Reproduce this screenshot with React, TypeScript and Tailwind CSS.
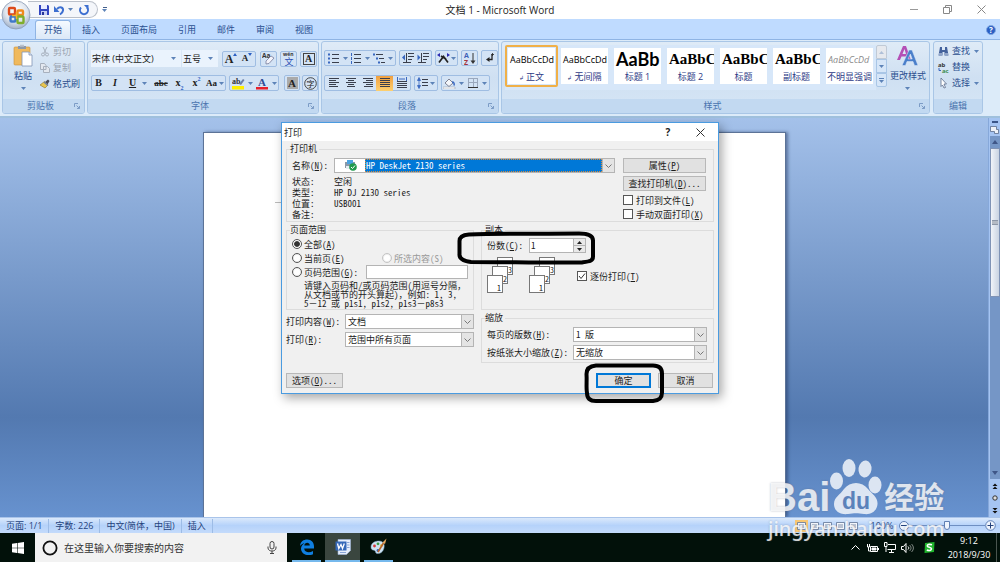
import type { ReactNode } from "react";

const UI = "[font-family:'Open_Sans','Noto_Sans_CJK_SC',sans-serif]";
const SONG = "[font-family:'Noto_Sans_Mono_CJK_SC','Noto_Sans_CJK_SC',monospace]";
const SERIF = "[font-family:'Liberation_Serif','Noto_Sans_CJK_SC',serif]";

type Kids = { children?: ReactNode; className?: string };

function Caret({ className = "" }: { className?: string }) {
  return (
    <svg viewBox="0 0 5 3" className={`h-[3px] w-[5px] shrink-0 ${className}`}>
      <path d="M0 0h5L2.500 3z" fill="#5d83b8" />
    </svg>
  );
}

/* ---------- title bar ---------- */

function OfficeOrb() {
  return (
    <svg viewBox="0 0 30 30" className="h-[30px] w-[30px]">
      <defs>
        <radialGradient id="orb" cx="50%" cy="35%" r="65%">
          <stop offset="0" stopColor="#ffffff" />
          <stop offset=".6" stopColor="#dfe5ee" />
          <stop offset="1" stopColor="#9fb0c8" />
        </radialGradient>
      </defs>
      <circle cx="15" cy="15" r="14" fill="url(#orb)" stroke="#8a9ab4" strokeWidth=".8" />
      <g fill="none" strokeWidth="2.400">
        <rect x="8" y="8" width="6" height="6.500" rx="1" stroke="#dc4a1c" />
        <rect x="16.500" y="10.500" width="5.500" height="4.500" rx="1" stroke="#f08a1d" />
        <rect x="9.500" y="16.500" width="5" height="5" rx="1" stroke="#3f78c8" />
        <rect x="16.500" y="16.500" width="6" height="6.500" rx="1" stroke="#7fae2c" />
      </g>
      <path d="M11 15.500h5M15.500 12v7" stroke="#f4b52a" strokeWidth="1.500" />
    </svg>
  );
}

function TitleBar() {
  return (
    <header className="grid h-[19px] shrink-0 grid-cols-3 items-center bg-white">
      <div className="flex h-full items-center pl-7">
        <div className="flex h-[17px] w-[70px] items-center rounded-r-full border border-l-0 border-[#b9bfc9] bg-[#f4f6fa] pl-[10px]">
          <button aria-label="保存" className="h-3 w-3">
            <svg viewBox="0 0 12 12">
              <path d="M1 1h9l1 1v9H1z" fill="#3346c0" />
              <path d="M3 1h6v4H3z" fill="#e8ecff" />
              <path d="M3 7h6v4H3z" fill="#c7cff3" />
              <path d="M4 8h2v3H4z" fill="#26359a" />
            </svg>
          </button>
          <button aria-label="撤消" className="ml-1 flex items-center gap-[3px]">
            <svg viewBox="0 0 11 12" className="h-3 w-[11px]">
              <path d="M3 5c3-3 6.500-1.500 6 1.500-.3 2-1.500 3-3 4" fill="none" stroke="#3d6fd0" strokeWidth="2" />
              <path d="M0 2v6h5.500z" fill="#3d6fd0" />
            </svg>
            <Caret />
          </button>
          <button aria-label="重复" className="ml-[5px] h-3 w-3">
            <svg viewBox="0 0 12 12">
              <path d="M3 3.500a4 4 0 1 0 6 0" fill="none" stroke="#3d6fd0" strokeWidth="2" />
              <path d="M6 1h4.500v5z" fill="#3d6fd0" />
            </svg>
          </button>
        </div>
        <button aria-label="自定义快速访问工具栏" className="ml-1 flex flex-col items-center gap-px">
          <span className="h-px w-[4px] bg-[#44608c]" />
          <Caret />
        </button>
      </div>
      <h1 className="text-center text-[10px] leading-[14px] whitespace-nowrap text-[#222]">文档 1 - Microsoft Word</h1>
      <div className="flex items-center justify-end gap-[25px] pr-[14px]">
        <button aria-label="最小化" className="flex h-2 w-2 items-center">
          <span className="h-px w-2 bg-[#999]" />
        </button>
        <button aria-label="向下还原" className="h-[9px] w-[9px]">
          <svg viewBox="0 0 9 9" fill="none" stroke="#888">
            <path d="M.5 2.500h6v6h-6zM2.500 2V.5h6v6H7" />
          </svg>
        </button>
        <button aria-label="关闭" className="h-[9px] w-[9px]">
          <svg viewBox="0 0 9 9" fill="none" stroke="#888">
            <path d="M.5.500l8 8M8.500.500l-8 8" />
          </svg>
        </button>
      </div>
    </header>
  );
}

function Tabs() {
  const tabs = ["插入", "页面布局", "引用", "邮件", "审阅", "视图"];
  return (
    <nav className="flex h-5 shrink-0 items-end gap-px bg-[#bfdbff] pl-[35px] text-[9px] text-[#2a4f8f]">
      <button className="h-[19px] rounded-t-[3px] border border-b-0 border-[#8fb4e4] bg-linear-to-b from-[#f5faff] to-[#dbe8f7] px-2 leading-[16px]">
        开始
      </button>
      {tabs.map((t) => (
        <button key={t} className="h-[19px] px-[10px] leading-[17px]">
          {t}
        </button>
      ))}
      <button
        aria-label="帮助"
        className="mr-1 mb-1 ml-auto flex h-[10px] w-[10px] items-center justify-center rounded-full border border-[#7fa6e0] bg-[#2b5fc4] text-[8px] leading-none font-bold text-white"
      >
        ?
      </button>
    </nav>
  );
}

/* ---------- ribbon ---------- */

function Group({ label, launcher = true, className = "", children }: Kids & { label: string; launcher?: boolean }) {
  return (
    <section
      className={`flex flex-col overflow-hidden rounded-[3px] border border-[#a9c6e6] bg-linear-to-b from-[#dfebf7] via-[#cfe0f2] to-[#d6e6f6] ${className}`}
    >
      <div className="flex-1">{children}</div>
      <div className="flex h-[14px] items-center bg-[#c2d9f1] px-1 text-[9px] leading-[14px] text-[#4a74ae]">
        <span className="flex-1 text-center">{label}</span>
        {launcher && (
          <button aria-label={`${label}选项`} className="h-[6px] w-[6px]">
            <svg viewBox="0 0 6 6" fill="none" stroke="#7c9cc6">
              <path d="M.5 4V.5H4M2.500 2.500l3 3M5.500 3v2.500H3" />
            </svg>
          </button>
        )}
      </div>
    </section>
  );
}

function Box({ children, className = "" }: Kids) {
  return (
    <div className={`flex h-4 items-center rounded-[2px] border border-[#9fbde2] bg-[#d3e3f5] ${className}`}>{children}</div>
  );
}

function Tool({ name, children, className = "w-4" }: Kids & { name: string }) {
  return (
    <button aria-label={name} className={`flex h-[15px] items-center justify-center gap-[3px] leading-none ${className}`}>
      {children}
    </button>
  );
}

function ClipboardGroup() {
  return (
    <Group label="剪贴板" className="w-[83px]">
      <div className="flex gap-1 pt-[2px] pl-[7px] text-[9px] text-[#2a4f8f]">
        <button className="flex w-[26px] flex-col items-center">
          <svg viewBox="0 0 20 23" className="h-[23px] w-5">
            <rect x="1" y="3" width="16" height="18" rx="1" fill="#f0b95c" stroke="#c98f38" strokeWidth=".6" />
            <path d="M5 2h8v3H5z" fill="#8d98a8" />
            <path d="M7 .800h4v2H7z" fill="#b9c1cc" />
            <path d="M9 8h7l3 3v11H9z" fill="#fff" stroke="#8296b6" strokeWidth=".8" />
            <path d="M16 8v3h3" fill="#dce5f1" stroke="#8296b6" strokeWidth=".8" />
          </svg>
          <span className="mt-[2px] leading-[14px]">粘贴</span>
          <Caret className="mt-1" />
        </button>
        <div className="flex flex-col">
          <button className="flex h-4 items-center gap-[3px] text-[#9aa3b0]">
            <svg viewBox="0 0 10 10" className="h-[10px] w-[10px]" fill="none" stroke="#a7b0bd">
              <path d="M3 0l3 6M7 0L4 6" />
              <circle cx="3" cy="7.500" r="1.500" />
              <circle cx="7" cy="7.500" r="1.500" />
            </svg>
            剪切
          </button>
          <button className="flex h-4 items-center gap-[3px] text-[#9aa3b0]">
            <svg viewBox="0 0 10 10" className="h-[10px] w-[10px]" fill="#e3e8ef" stroke="#a7b0bd">
              <path d="M.5.500h4l1.500 2v4H.5zM3.500 3.500h4l2 2v4h-6z" />
            </svg>
            复制
          </button>
          <button className="flex h-4 items-center gap-[3px]">
            <svg viewBox="0 0 10 10" className="h-[10px] w-[10px]">
              <path d="M5 3l2.500 2.500L9.500 2 8 .500z" fill="#4a4a58" />
              <path d="M4.500 2.500L8 6 5 9 0 6z" fill="#e9c64f" stroke="#8c7427" strokeWidth=".6" />
              <path d="M4 3l4 3.500" stroke="#6c7fa8" strokeWidth="1.500" />
            </svg>
            格式刷
          </button>
        </div>
      </div>
    </Group>
  );
}

function Combo({ label, value, className }: { label: string; value: string; className: string }) {
  return (
    <label className={`flex h-[17px] items-center bg-[#eaf3fd] pr-[5px] ${className}`}>
      <select aria-label={label} className="h-full min-w-0 flex-1 appearance-none bg-transparent pl-px text-[9px] leading-[17px] text-[#222]">
        <option>{value}</option>
      </select>
      <Caret />
    </label>
  );
}

function FontGroup() {
  return (
    <Group label="字体" className="w-[232px]">
      <div className="flex flex-col gap-2 pt-2 pl-[3px]">
        <div className="flex items-center">
          <Combo label="字体名称" value="宋体 (中文正文)" className="w-[90px]" />
          <Combo label="字号" value="五号" className="ml-px w-[36px]" />
          <Box className={`ml-1 font-bold text-[#222] ${SERIF}`}>
            <Tool name="增大字体" className="w-4 text-[12px] !gap-0">
              A
              <svg viewBox="0 0 4 3" className="mt-[2px] h-[3px] w-1 self-start"><path d="M0 3h4L2 0z" fill="#2b5fc4" /></svg>
            </Tool>
            <Tool name="缩小字体" className="w-4 text-[9px] !gap-0">
              A
              <svg viewBox="0 0 4 3" className="mt-[2px] h-[3px] w-1 self-start"><path d="M0 0h4L2 3z" fill="#2b5fc4" /></svg>
            </Tool>
          </Box>
          <Box className="ml-1">
            <Tool name="清除格式" className="w-[15px]">
              <svg viewBox="0 0 13 13" className="h-[13px] w-[13px]">
                <text x="0" y="6" fontSize="6.500" fontWeight="bold" fill="#333">Aa</text>
                <path d="M4 9l5-5 3 2-5 5.500-3 .5z" fill="#f3f3fa" stroke="#777c9c" strokeWidth=".8" />
              </svg>
            </Tool>
          </Box>
          <Box className="ml-[3px]">
            <Tool name="拼音指南" className="w-[15px]">
              <svg viewBox="0 0 14 15" className="h-[15px] w-[14px] overflow-visible">
                <text x="1" y="5" fontSize="5" fontWeight="bold" fill="#333">wén</text>
                <text x="2.500" y="13.500" fontSize="9" fill="#2b4fb4">文</text>
              </svg>
            </Tool>
          </Box>
          <Box className="ml-[3px]">
            <Tool name="字符边框" className="w-[15px]">
              <span className={`h-[12px] w-[12px] border border-[#444] text-[10px] leading-[10px] font-bold text-[#222] ${SERIF}`}>A</span>
            </Tool>
          </Box>
        </div>
        <div className={`flex items-center text-[#222] ${SERIF}`}>
          <Box>
            <Tool name="加粗" className="w-[13px] text-[10px] font-bold">B</Tool>
            <Tool name="倾斜" className="w-[20px] text-[10px] font-bold italic">I</Tool>
            <Tool name="下划线" className="w-[26px] text-[10px] font-bold">
              <span className="mr-[3px] underline">U</span>
              <Caret />
            </Tool>
            <Tool name="删除线" className="w-[20px] text-[9px] font-bold line-through">abc</Tool>
            <Tool name="下标" className="w-[17px] text-[10px] font-bold !gap-0">
              x<span className="self-end text-[6px] text-[#2b5fc4]">2</span>
            </Tool>
            <Tool name="上标" className="w-[17px] text-[10px] font-bold !gap-0">
              x<span className="self-start text-[6px] text-[#2b5fc4]">2</span>
            </Tool>
            <Tool name="更改大小写" className="w-[20px] text-[9px] font-bold !gap-[2px]">
              Aa
              <Caret />
            </Tool>
          </Box>
          <Box className="ml-[3px]">
            <Tool name="突出显示" className="w-6">
              <svg viewBox="0 0 13 13" className="h-[13px] w-[13px]">
                <text x="0" y="7" fontSize="8" fontWeight="bold" fill="#333">ab</text>
                <path d="M7 7l4-5 1.500 1L9 8z" fill="#6c7fa8" />
                <path d="M0 9h12v3.500H0z" fill="#ffee00" />
              </svg>
              <Caret />
            </Tool>
            <Tool name="字体颜色" className="w-6">
              <svg viewBox="0 0 13 13" className="h-[13px] w-[13px]">
                <text x="2" y="9" fontSize="11" fontWeight="bold" fill="#2e4a94">A</text>
                <path d="M0 10h12v2.500H0z" fill="#e8202a" />
              </svg>
              <Caret />
            </Tool>
          </Box>
          <Box className="ml-[5px]">
            <Tool name="字符底纹" className="w-[14px]">
              <span className="h-[12px] w-[11px] bg-[#aaa] text-center text-[11px] leading-[12px] font-bold">A</span>
            </Tool>
          </Box>
          <Box className="ml-[2px]">
            <Tool name="带圈字符" className="w-[14px]">
              <svg viewBox="0 0 13 13" className="h-[13px] w-[13px]">
                <circle cx="6.500" cy="6.500" r="5.800" fill="none" stroke="#333" strokeWidth=".9" />
                <text x="2.500" y="9.500" fontSize="8" fill="#222">字</text>
              </svg>
            </Tool>
          </Box>
        </div>
      </div>
    </Group>
  );
}

function Lines({ d, dots }: { d: string; dots?: ReactNode }) {
  return (
    <svg viewBox="0 0 12 12" className="h-3 w-3" fill="none">
      <path d={d} stroke="#3a3f4c" />
      {dots}
    </svg>
  );
}

function ParagraphGroup() {
  const blue = "#3867c0";
  return (
    <Group label="段落" className="w-[178px]">
      <div className="flex flex-col gap-[9px] pt-2 pl-[2px]">
        <div className="flex items-center gap-[3px]">
          <Box className="w-[73px] justify-between px-[2px]">
            <Tool name="项目符号" className="w-[21px]">
              <Lines d="M4 2.500h7M4 6.500h7M4 10.500h7" dots={<path d="M0 2.500h2M0 6.500h2M0 10.500h2" stroke={blue} strokeWidth="2" />} />
              <Caret />
            </Tool>
            <Tool name="编号" className="w-[21px]">
              <Lines d="M4 2.500h7M4 6.500h7M4 10.500h7" dots={<path d="M1.500 1v3M1.500 5v3M1.500 9v3" stroke={blue} />} />
              <Caret />
            </Tool>
            <Tool name="多级列表" className="w-[21px]">
              <Lines d="M3 2.500h7M6 6.500h5M8 10.500h4" dots={<path d="M0 2.500h2M3 6.500h2M5 10.500h2" stroke={blue} strokeWidth="2" />} />
              <Caret />
            </Tool>
          </Box>
          <Box className="w-[33px] justify-around">
            <Tool name="减少缩进量" className="w-[14px]">
              <Lines d="M6 1.500h6M6 4.500h6M6 7.500h4M1 10.500h8M4.500 1v10" dots={<path d="M0 5.500l3-3v6z" fill={blue} />} />
            </Tool>
            <Tool name="增加缩进量" className="w-[14px]">
              <Lines d="M6 1.500h6M6 4.500h6M6 7.500h4M1 10.500h8M4.500 1v10" dots={<path d="M3.500 5.500l-3-3v6z" fill={blue} />} />
            </Tool>
          </Box>
          <Box className="w-[23px]">
            <Tool name="中文版式" className="w-[22px] !gap-px">
              <svg viewBox="0 0 13 12" className="h-3 w-[13px]" fill="none">
                <path d="M2 10.500l4.500-6 4.500 6M4 4l5 3" stroke="#222" strokeWidth="1.700" />
                <path d="M0 3l3-2v4zM13 3l-3-2v4z" fill="#2b2bb0" />
              </svg>
              <Caret />
            </Tool>
          </Box>
          <Box className="w-[17px]">
            <Tool name="排序" className="w-4">
              <svg viewBox="0 0 12 13" className="h-[13px] w-3">
                <text x="0" y="6" fontSize="7" fontWeight="bold" fill="#3d5fb8">A</text>
                <text x="0" y="12.500" fontSize="7" fontWeight="bold" fill="#a5343c">Z</text>
                <path d="M9 1v9" stroke="#333" />
                <path d="M6.500 8.500h5L9 12z" fill="#333" />
              </svg>
            </Tool>
          </Box>
          <Box className="w-[17px]">
            <Tool name="显示编辑标记" className="w-4">
              <svg viewBox="0 0 12 12" className="h-3 w-3">
                <path d="M8 3v4.500H5" fill="none" stroke="#222" strokeWidth="1.300" />
                <path d="M2 7.500l3.500-2.500v5z" fill="#222" />
                <path d="M7 2.500h3M8.500 1v3" stroke="#222" strokeWidth=".8" />
              </svg>
            </Tool>
          </Box>
        </div>
        <div className="flex items-center gap-[3px]">
          <Box>
            <Tool name="左对齐" className="w-[17px]"><Lines d="M1 1.500h10M1 3.500h7M1 5.500h10M1 7.500h7M1 9.500h9" /></Tool>
            <Tool name="居中" className="w-[17px]"><Lines d="M1 1.500h10M3 3.500h6M1 5.500h10M3 7.500h6M2 9.500h8" /></Tool>
            <Tool name="右对齐" className="w-[17px]"><Lines d="M1 1.500h10M4 3.500h7M1 5.500h10M4 7.500h7M2 9.500h9" /></Tool>
            <Tool name="两端对齐" className="w-[17px] bg-linear-to-b from-[#f0a040] to-[#fdd070]">
              <Lines d="M1 1.500h10M1 3.500h10M1 5.500h10M1 7.500h10M1 9.500h10" />
            </Tool>
            <Tool name="分散对齐" className="w-[17px]">
              <Lines d="M1 4.500h10M1 6.500h10M1 8.500h10M1 10.500h10" dots={<path d="M1.500 0v4M10.500 0v4M3 2h6" stroke={blue} />} />
            </Tool>
          </Box>
          <Box className="w-[24px]">
            <Tool name="行距" className="w-[22px] !gap-px">
              <Lines d="M5 2.500h6M5 5.500h6M5 8.500h6" dots={<path d="M.5 3.500l1.500-3 1.500 3zM.5 8.500l1.500 3 1.500-3zM2 3v6" fill={blue} stroke={blue} strokeWidth=".8" />} />
              <Caret />
            </Tool>
          </Box>
          <Box className="w-[49px]">
            <Tool name="底纹" className="w-6">
              <svg viewBox="0 0 13 12" className="h-3 w-[13px]">
                <path d="M2 6l4-4 4 4-4 3.500z" fill="#f5f7fb" stroke="#667" strokeWidth=".8" />
                <path d="M9 5c2 0 2.500 1.500 2 3.500" fill="none" stroke="#3867c0" strokeWidth="1.500" />
                <path d="M0 10h12v2H0z" fill="#fff" stroke="#8b93a3" strokeWidth=".5" />
              </svg>
              <Caret />
            </Tool>
            <Tool name="边框" className="w-6">
              <svg viewBox="0 0 12 12" className="h-3 w-3" fill="none">
                <path d="M1.500 1v9M6.500 1v9M10.500 1v9M1 1.500h10M1 5.500h10" stroke="#9aa8bd" />
                <path d="M1 10.500h10" stroke="#333" />
              </svg>
              <Caret />
            </Tool>
          </Box>
        </div>
      </div>
    </Group>
  );
}

const STYLES = [
  { sample: "AaBbCcDd", label: "正文", mark: true, cls: "text-[9px]" },
  { sample: "AaBbCcDd", label: "无间隔", mark: true, cls: "text-[9px]" },
  { sample: "AaBb", label: "标题 1", cls: "text-[18px] font-bold [font-family:'Lato','Open_Sans',sans-serif]" },
  { sample: "AaBbC", label: "标题 2", cls: "text-[15px] font-bold [font-family:'Liberation_Serif',serif]" },
  { sample: "AaBbC", label: "标题", cls: "text-[15px] font-bold [font-family:'Liberation_Serif',serif]" },
  { sample: "AaBbC", label: "副标题", cls: "text-[15px] font-bold [font-family:'Liberation_Serif',serif]" },
  { sample: "AaBbCcDd", label: "不明显强调", cls: "text-[9px] italic text-[#8a8a8a]" },
];

function StylesGroup() {
  return (
    <Group label="样式" className="min-w-[428px] flex-1">
      <div className="flex pt-[3px] pl-[3px]">
        <div className="flex flex-1 bg-[#d7e7f9]">
          {STYLES.map((s, i) => (
            <button
              key={s.label}
              className={`flex h-[42px] w-[53px] shrink-0 rounded-[2px] border-2 p-px ${
                i === 0 ? "border-[#f0b048]" : "border-transparent"
              }`}
            >
              <span className="flex h-full w-full flex-col overflow-hidden bg-white text-black">
                <span className={`h-[23px] overflow-hidden pl-[2px] text-left leading-[23px] whitespace-nowrap ${s.cls}`}>
                  {s.sample}
                </span>
                <span className="text-center text-[9px] leading-[12px] whitespace-nowrap text-[#2d3a86]">
                  {s.mark && <span className="mr-[2px] text-[6px]">↲</span>}
                  {s.label}
                </span>
              </span>
            </button>
          ))}
        </div>
        <div className="flex w-[11px] flex-col">
          <button aria-label="上一行" className="flex h-[14px] items-center justify-center rounded-t-[2px] border border-[#c0cad6] bg-[#e6e9ee]">
            <Caret className="rotate-180 opacity-40" />
          </button>
          <button aria-label="下一行" className="flex h-[14px] items-center justify-center border border-[#a9c6e6] bg-[#d6e6f8]">
            <Caret />
          </button>
          <button aria-label="其他" className="flex h-[14px] flex-col items-center justify-center gap-px rounded-b-[2px] border border-[#a9c6e6] bg-[#d6e6f8]">
            <span className="h-px w-[5px] bg-[#5d83b8]" />
            <Caret />
          </button>
        </div>
        <button className="flex w-[43px] flex-col items-center text-[9px] whitespace-nowrap text-[#2a4f8f]">
          <svg viewBox="0 0 22 22" className="h-[22px] w-[22px]">
            <path d="M0 15L6 1h3l5 14h-3l-1-3.500H4.500L3 15zM5.500 9H9L7.500 4z" fill="#b44fb6" />
            <path d="M5 20.500L12 5h3l6 15.500h-3.500L16 16.500h-6L8.500 20.500zM11 14h4.200L13.400 9z" fill="#4a7fca" stroke="#dfeaf8" strokeWidth=".5" />
          </svg>
          <span className="mt-[2px] leading-[14px]">更改样式</span>
          <Caret className="mt-1" />
        </button>
      </div>
    </Group>
  );
}

function EditGroup() {
  return (
    <Group label="编辑" launcher={false} className="ml-px w-[50px]">
      <div className="flex flex-col pt-px pl-[4px] text-[9px] text-[#2a4f8f]">
        <button className="flex h-4 items-center gap-[3px]">
          <svg viewBox="0 0 11 11" className="h-[11px] w-[11px]">
            <path d="M2 1h2v3h3V1h2l1.500 8.500h-4V6h-2v3.500H.5z" fill="#44629c" />
            <path d="M1 8h3M7 8h3" stroke="#dde8f6" />
          </svg>
          查找
          <Caret className="ml-px" />
        </button>
        <button className="flex h-4 items-center gap-[3px]">
          <svg viewBox="0 0 11 12" className="h-3 w-[11px] overflow-visible">
            <text x="0" y="5.500" fontSize="6" fontWeight="bold" fill="#333">ab</text>
            <text x="4" y="11.500" fontSize="6" fontWeight="bold" fill="#3b8d50">ac</text>
            <path d="M1 7v2.500h2" fill="none" stroke="#3867c0" />
          </svg>
          替换
        </button>
        <button className="flex h-4 items-center gap-[3px]">
          <svg viewBox="0 0 11 12" className="h-3 w-[11px]">
            <path d="M3 1l5.500 6H6l1.500 3.500-1.500.500L4.500 8 3 9.500z" fill="#fff" stroke="#5a6c8c" strokeWidth=".8" />
          </svg>
          选择
          <Caret className="ml-px" />
        </button>
      </div>
    </Group>
  );
}

function Ribbon() {
  return (
    <div className="flex h-[79px] shrink-0 gap-[2px] border-t border-b-2 border-t-[#8fb4e4] border-b-[#9fc0dd] bg-[#dcebf9] pt-px pr-[17px] pb-[2px] pl-[2px]">
      <ClipboardGroup />
      <FontGroup />
      <ParagraphGroup />
      <StylesGroup />
      <EditGroup />
    </div>
  );
}

/* ---------- print dialog ---------- */

function Key({ k }: { k: string }) {
  return (
    <>
      (<u>{k}</u>)
    </>
  );
}

function Field({ legend, className = "", children }: Kids & { legend: string }) {
  return (
    <fieldset className={`min-w-0 border border-[#dcdcdc] ${className}`}>
      <legend className="ml-[3px] pr-[2px] leading-[10px]">{legend}</legend>
      {children}
    </fieldset>
  );
}

function Arrow() {
  return (
    <span className="flex w-3 items-center justify-center border-l border-[#b4b4b4] bg-[#e4e4e4]">
      <svg viewBox="0 0 7 4" className="h-1 w-[7px]" fill="none" stroke="#777">
        <path d="M.5.500l3 3 3-3" />
      </svg>
    </span>
  );
}

function Drop({ id, value, className = "" }: { id: string; value: string; className?: string }) {
  return (
    <div className={`flex h-[15px] border border-[#b4b4b4] bg-white ${className}`}>
      <select id={id} className="min-w-0 flex-1 appearance-none pl-[2px] leading-[13px]">
        <option>{value}</option>
      </select>
      <Arrow />
    </div>
  );
}

function DlgButton({ children, className = "" }: Kids) {
  return (
    <button className={`flex h-[15px] items-center justify-center border border-[#b8b8b8] bg-[#e1e1e1] leading-[13px] whitespace-nowrap ${className}`}>
      {children}
    </button>
  );
}

function Check({ id, checked, children }: Kids & { id: string; checked?: boolean }) {
  return (
    <div className="flex h-[14px] items-center gap-[3px] whitespace-nowrap">
      <span className="grid h-[10px] w-[10px] shrink-0">
        <input
          id={id}
          type="checkbox"
          defaultChecked={checked}
          className="peer col-start-1 row-start-1 h-[10px] w-[10px] appearance-none border border-[#555] bg-white"
        />
        <svg
          viewBox="0 0 10 10"
          className="pointer-events-none col-start-1 row-start-1 hidden h-[10px] w-[10px] peer-checked:block"
          fill="none"
          stroke="#333"
        >
          <path d="M2 5l2 2.500L8 2.500" />
        </svg>
      </span>
      <label htmlFor={id}>{children}</label>
    </div>
  );
}

function Radio({ id, checked, disabled, children, className = "" }: Kids & { id: string; checked?: boolean; disabled?: boolean }) {
  return (
    <div className={`flex h-[14px] items-center gap-[2px] whitespace-nowrap ${disabled ? "text-[#999]" : ""} ${className}`}>
      <input
        id={id}
        type="radio"
        name="range"
        defaultChecked={checked}
        disabled={disabled}
        className="h-[10px] w-[10px] shrink-0 appearance-none rounded-full border border-[#555] bg-white bg-clip-content p-px checked:bg-[#333] checked:shadow-[inset_0_0_0_1px_#fff] disabled:border-[#c4c4c4]"
      />
      <label htmlFor={id}>{children}</label>
    </div>
  );
}

function Sheets() {
  const sheet = (x: number, y: number, n: string, tx: number) => (
    <g key={n}>
      <rect x={x} y={y} width="15" height="17" fill="#fff" stroke="#777" />
      <text x={tx} y={y + 15} fontSize="8" fill="#222">
        {n}
      </text>
    </g>
  );
  return (
    <svg viewBox="0 0 26 36" className="h-9 w-[26px]">
      {sheet(10.5, 0.5, "3", 21)}
      {sheet(5.5, 9.5, "2", 16)}
      {sheet(0.5, 18.5, "1", 10)}
    </svg>
  );
}

function PrintDialog() {
  return (
    <div
      role="dialog"
      aria-label="打印"
      className={`absolute top-[122px] left-1/2 w-[438px] -translate-x-1/2 border border-[#4a9be0] bg-[#f0f0f0] text-[9px] leading-[11px] text-[#1c1c1c] shadow-[3px_4px_10px_rgba(0,0,0,0.35)] ${SONG}`}
    >
      <div className="flex h-[18px] items-center bg-white pr-[13px] pl-[2px]">
        <span className={UI}>打印</span>
        <button aria-label="帮助" className={`ml-auto w-2 text-[10px] font-bold ${UI}`}>
          ?
        </button>
        <button aria-label="关闭" className="ml-6 h-[9px] w-[9px]">
          <svg viewBox="0 0 9 9" fill="none" stroke="#333">
            <path d="M.5.500l8 8M8.500.500l-8 8" />
          </svg>
        </button>
      </div>
      <div className="px-1 pt-[3px] pb-[5px]">
        <Field legend="打印机" className="h-[78px]">
          <div className="flex gap-2 pt-1 pr-[7px] pl-[5px]">
            <div className="flex-1">
              <div className="flex h-[15px] items-center">
                <label htmlFor="printer" className="w-[42px]">
                  名称<Key k="N" />:
                </label>
                <div className="flex h-[15px] flex-1 border border-[#b4b4b4] bg-white">
                  <span className="flex w-[30px] items-center justify-center">
                    <svg viewBox="0 0 13 11" className="h-[11px] w-[13px]">
                      <path d="M1 2h10v6H1z" fill="#8a98a8" />
                      <path d="M3 0h6v4H3z" fill="#4aa3e0" />
                      <path d="M2 6h5v3H2z" fill="#e7edf3" />
                      <circle cx="9" cy="7" r="3.800" fill="#1f9a4c" />
                      <path d="M7 7l1.500 1.500L11 5.500" fill="none" stroke="#fff" />
                    </svg>
                  </span>
                  <select
                    id="printer"
                    className="min-w-0 flex-1 appearance-none border border-dotted border-[#d98a3a] bg-[#0078d7] leading-[11px] text-white"
                  >
                    <option>HP DeskJet 2130 series</option>
                  </select>
                  <Arrow />
                </div>
              </div>
              <dl className="mt-[3px] grid auto-rows-[11px] grid-cols-[42px_1fr]">
                <dt>状态:</dt>
                <dd>空闲</dd>
                <dt>类型:</dt>
                <dd>HP DJ 2130 series</dd>
                <dt>位置:</dt>
                <dd>USB001</dd>
                <dt>备注:</dt>
                <dd />
              </dl>
            </div>
            <div className="flex w-[83px] flex-col">
              <DlgButton>
                <span>属性<Key k="P" /></span>
              </DlgButton>
              <DlgButton className="mt-[3px] mb-[2px]">
                <span>查找打印机<Key k="D" />...</span>
              </DlgButton>
              <Check id="tofile">打印到文件<Key k="L" /></Check>
              <Check id="duplex">手动双面打印<Key k="X" /></Check>
            </div>
          </div>
        </Field>

        <div className="mt-[3px] flex gap-[7px]">
          <div className="w-[188px]">
            <Field legend="页面范围" className="h-[85px]">
              <div className="pt-[2px] pl-[5px]">
                <Radio id="all" checked>全部<Key k="A" /></Radio>
                <div className="flex">
                  <Radio id="cur" className="w-[90px]">当前页<Key k="E" /></Radio>
                  <Radio id="sel" disabled>所选内容(S)</Radio>
                </div>
                <div className="flex items-center">
                  <Radio id="pages" className="w-[74px]">页码范围<Key k="G" />:</Radio>
                  <input aria-label="页码范围" className="h-[14px] w-[102px] border border-[#b4b4b4] bg-white" />
                </div>
                <p className="pt-[2px] pl-3 leading-[9px] whitespace-nowrap">
                  请键入页码和/或页码范围(用逗号分隔，
                  <br />
                  从文档或节的开头算起)，例如: 1, 3,
                  <br />
                  5－12 或 p1s1, p1s2, p1s3－p8s3
                </p>
              </div>
            </Field>
            <div className="mt-1 flex items-center">
              <label htmlFor="what" className="w-[59px]">打印内容<Key k="W" />:</label>
              <Drop id="what" value="文档" className="flex-1" />
            </div>
            <div className="mt-[3px] flex items-center">
              <label htmlFor="which" className="w-[59px]">打印<Key k="R" />:</label>
              <Drop id="which" value="范围中所有页面" className="flex-1" />
            </div>
          </div>

          <div className="flex-1">
            <Field legend="副本" className="h-[85px]">
              <div className="pl-[5px]">
                <div className="flex items-center pt-[3px]">
                  <label htmlFor="copies" className="w-[42px]">份数<Key k="C" />:</label>
                  <input id="copies" defaultValue="1" className="h-[15px] w-[45px] border border-[#b4b4b4] bg-white pl-px" />
                  <div className="flex h-[15px] w-3 flex-col border border-l-0 border-[#b4b4b4] bg-[#e9e9e9]">
                    <button aria-label="增加" className="flex flex-1 items-center justify-center border-b border-[#b4b4b4]">
                      <svg viewBox="0 0 5 3" className="h-[3px] w-[5px]"><path d="M0 3h5L2.500 0z" fill="#222" /></svg>
                    </button>
                    <button aria-label="减少" className="flex flex-1 items-center justify-center">
                      <svg viewBox="0 0 5 3" className="h-[3px] w-[5px]"><path d="M0 0h5L2.500 3z" fill="#222" /></svg>
                    </button>
                  </div>
                </div>
                <div className="mt-1 flex">
                  <Sheets />
                  <div className="ml-4"><Sheets /></div>
                  <div className="mt-3 ml-[22px]">
                    <Check id="collate" checked>逐份打印<Key k="T" /></Check>
                  </div>
                </div>
              </div>
            </Field>
            <Field legend="缩放" className="mt-[3px] h-[50px]">
              <div className="flex flex-col gap-[3px] pt-1 pr-[6px] pl-[5px]">
                <div className="flex items-center">
                  <label htmlFor="perpage" className="w-[86px]">每页的版数<Key k="H" />:</label>
                  <Drop id="perpage" value="1 版" className="flex-1" />
                </div>
                <div className="flex items-center">
                  <label htmlFor="scale" className="w-[86px]">按纸张大小缩放<Key k="Z" />:</label>
                  <Drop id="scale" value="无缩放" className="flex-1" />
                </div>
              </div>
            </Field>
          </div>
        </div>

        <div className="mt-[10px] flex">
          <DlgButton className="w-[57px]">
            <span>选项<Key k="O" />...</span>
          </DlgButton>
          <DlgButton className="ml-auto w-[55px] !border-2 !border-[#0078d7] !leading-[11px]">确定</DlgButton>
          <DlgButton className="mr-px ml-[7px] w-[55px]">取消</DlgButton>
        </div>
      </div>

      <svg viewBox="0 0 140 34" className="pointer-events-none absolute top-[108px] left-[175px] h-[34px] w-[140px]" fill="none" stroke="#000" strokeWidth="4">
        <path d="M12 3.500C40 2 60 3 122 2.500c10 0 14 3 14 7v16c0 5-4 5-12 6C90 32 50 31 14 31c-8-1-12-3-11.500-8V10c0-4 3-6 9.500-6.500z" />
      </svg>
      <svg viewBox="0 0 80 42" className="pointer-events-none absolute top-[239px] left-[302px] h-[42px] w-20" fill="none" stroke="#000" strokeWidth="4">
        <path d="M12 3.500h57c6 0 9 3 9 8v19c0 6-3 8-9 8.500H12c-6 0-9-3-9-8-1-6 0-12-.500-19 0-5 3-8 9.500-8.500z" />
      </svg>
    </div>
  );
}

/* ---------- document, scrollbar ---------- */

function Workspace() {
  return (
    <main className="flex min-h-0 flex-1">
      <div className="min-w-0 flex-1 overflow-hidden bg-linear-to-b from-[#a4c1ea] from-0% via-[#5379b0] via-75% to-[#6792cf] to-100% pt-[14px]">
        <div className="mx-auto h-full w-[583px] border border-b-0 border-[#5c7397] bg-white shadow-[2px_0_3px_rgba(30,50,90,0.5)]">
          <div className="mt-[69px] ml-[71px] h-px w-[9px] bg-[#bbb]" />
        </div>
      </div>
      <div className="flex w-3 flex-col items-center border-l border-[#86a8da] bg-[#a5c4f2] pt-[3px]">
        <span className="h-[2px] w-[6px] bg-[#3a5588]" />
        <button aria-label="标尺" className="mt-[2px] h-[9px] w-[9px]">
          <svg viewBox="0 0 9 9" fill="#eef2f8" stroke="#5a6c8c" strokeWidth=".8">
            <path d="M.5 1.500h6v3h2v4h-4v-2h-4z" />
          </svg>
        </button>
        <div className="mt-[2px] flex w-[10px] flex-1 flex-col items-center bg-[#7596c6]">
          <button aria-label="向上滚动" className="flex h-3 items-center">
            <svg viewBox="0 0 6 4" className="h-1 w-[6px]"><path d="M0 4h6L3 0z" fill="#3f5687" /></svg>
          </button>
          <div className="flex h-[149px] w-[10px] items-center justify-center border border-[#7f93b6] bg-linear-to-r from-[#f1f4f9] to-[#c9d3e2]">
            <span className="h-[5px] w-[6px] border-y border-[#8d97a8] bg-[#b4bac4]" />
          </div>
          <button aria-label="向下滚动" className="mt-auto flex h-3 items-center">
            <svg viewBox="0 0 6 4" className="h-1 w-[6px]"><path d="M0 0h6L3 4z" fill="#3f5687" /></svg>
          </button>
        </div>
        <svg viewBox="0 0 8 38" className="h-[38px] w-2">
          <path d="M1.500 7L4 4.500 6.500 7zM1.500 10L4 7.500 6.500 10zM1.500 29L4 31.500 6.500 29zM1.500 32L4 34.500 6.500 32z" fill="#111" />
          <circle cx="4" cy="19" r="2.200" fill="#ddd" stroke="#333" />
        </svg>
      </div>
    </main>
  );
}

function StatusBar() {
  const items = ["页面: 1/1", "字数: 226", "中文(简体，中国)", "插入"];
  return (
    <footer className="flex h-4 shrink-0 items-center border-t border-[#a9c4ea] bg-linear-to-b from-[#dbe9fb] via-[#b5d2fa] to-[#c4dbfb] text-[9px] leading-[14px] whitespace-nowrap text-[#25437c]">
      {items.map((t) => (
        <span key={t} className="border-r border-[#9dbce6] px-[6px]">
          {t}
        </span>
      ))}
      <div className="ml-auto flex items-center pr-1">
        {["页面视图", "阅读版式", "Web 版式", "大纲", "草稿"].map((n, i) => (
          <button
            key={n}
            aria-label={n}
            className={`flex h-3 w-[13px] items-center justify-center ${i === 0 ? "bg-[#f7c774]" : ""}`}
          >
            <svg viewBox="0 0 9 8" className="h-2 w-[9px]" fill="#f4f7fc" stroke="#5f7396" strokeWidth=".8">
              <path d="M.5.500h8v7h-8zM2 3h5M2 5h5" />
            </svg>
          </button>
        ))}
        <button className="ml-[9px] w-[26px]">100%</button>
        <button aria-label="缩小" className="ml-1 flex h-[10px] w-[10px] items-center justify-center rounded-full border border-[#5f7fb4] bg-[#eef4fd]">
          <span className="h-px w-[6px] bg-[#25437c]" />
        </button>
        <input
          aria-label="显示比例"
          type="range"
          className="h-[11px] w-[76px] appearance-none bg-linear-to-b from-transparent from-45% via-[#6f8fc2] via-50% to-transparent to-55% [&::-webkit-slider-thumb]:h-[9px] [&::-webkit-slider-thumb]:w-[6px] [&::-webkit-slider-thumb]:appearance-none [&::-webkit-slider-thumb]:rounded-b-[3px] [&::-webkit-slider-thumb]:border [&::-webkit-slider-thumb]:border-[#5f7fb4] [&::-webkit-slider-thumb]:bg-[#eef4fd]"
        />
        <button aria-label="放大" className="flex h-[11px] w-[11px] items-center justify-center">
          <svg viewBox="0 0 11 11">
            <circle cx="5.500" cy="5.500" r="4.800" fill="#eef4fd" stroke="#5f7fb4" />
            <path d="M2.500 5.500h6M5.500 2.500v6" stroke="#25437c" />
          </svg>
        </button>
      </div>
    </footer>
  );
}

/* ---------- taskbar ---------- */

function Taskbar() {
  return (
    <div className="flex h-[29px] shrink-0 bg-[#02110a] text-white">
      <button aria-label="开始" className="flex w-[35px] items-center justify-center">
        <svg viewBox="0 0 12 12" className="h-3 w-3" fill="#fff">
          <path d="M0 1.700l5-.700v4.700H0zM5.600.900L12 0v5.700H5.600zM0 6.300h5V11l-5-.700zM5.600 6.300H12V12l-6.400-.900z" />
        </svg>
      </button>
      <div className="flex w-[252px] items-center bg-[#f2f2f2] pl-[7px]">
        <svg viewBox="0 0 16 16" className="h-4 w-4">
          <circle cx="8" cy="8" r="6.600" fill="none" stroke="#111" strokeWidth="1.800" />
        </svg>
        <input
          aria-label="搜索"
          placeholder="在这里输入你要搜索的内容"
          className="ml-[6px] min-w-0 flex-1 bg-transparent text-[10px] leading-[14px] placeholder:text-[#333]"
        />
        <button aria-label="语音输入" className="mr-[10px] h-[13px] w-[10px]">
          <svg viewBox="0 0 10 13" fill="none" stroke="#444">
            <rect x="3" y=".5" width="4" height="7.500" rx="2" />
            <path d="M1 5.500v1.500c0 4 8 4 8 0V5.500M5 10v2.500M3 12.500h4" />
          </svg>
        </button>
      </div>
      <button aria-label="Edge" className="ml-[5px] flex w-[29px] flex-col items-center border-b-2 border-[#76b9ed] pt-[6px]">
        <svg viewBox="0 0 16 16" className="h-4 w-4">
          <path
            d="M1 7C1.500 2.500 4.500.500 8.200.500c4.300 0 6.800 3 6.800 7v2H5.200c.200 4 5.300 4.700 8.800 2.500v3.300C9 17.500 2.200 15.500 2 9.800c0-2.600 1.500-4.600 3.500-5.600C3.700 4.500 2 5.500 1 7zm4.300-.500h5.500C10.800 2.800 5.600 3 5.300 6.500z"
            fill="#0f7fe0"
          />
        </svg>
      </button>
      <button aria-label="Word" className="ml-1 flex w-[35px] flex-col items-center border-b-2 border-[#76b9ed] bg-[#3a463f] pt-[6px]">
        <svg viewBox="0 0 16 16" className="h-4 w-4">
          <path d="M3 .500h12.500v11l-4 4H3z" fill="#e6eefb" stroke="#9fb6dc" strokeWidth=".6" />
          <path d="M12 3.500h2.500M12 6h2.500M12 8.500h2.500M5 13.500h6" stroke="#8aa6d8" />
          <path d="M.5 2.500h11v9H.5z" fill="#3568b8" />
          <path d="M2.500 4.500l1.300 5L6 5.500l1.500 4L9.300 4.500" fill="none" stroke="#fff" strokeWidth="1.300" />
        </svg>
      </button>
      <button aria-label="画图" className="ml-1 flex w-[29px] flex-col items-center border-b-2 border-[#76b9ed] pt-[5px]">
        <svg viewBox="0 0 17 17" className="h-[17px] w-[17px]">
          <path d="M1 9c0-4 4-6 8-6s6 3 5 7-4 6-7 5.500c-2-.500-1-2.500-2.500-3S1 12 1 9z" fill="#cfe3f2" stroke="#7fa8c6" strokeWidth=".5" />
          <circle cx="4.500" cy="8" r="1.400" fill="#d8393c" />
          <circle cx="8" cy="5.800" r="1.400" fill="#3f9b46" />
          <circle cx="11.500" cy="7.500" r="1.300" fill="#e6b422" />
          <circle cx="8" cy="12.500" r="1.400" fill="#2c63c4" />
          <path d="M8 14l5.500-9" stroke="#b9652a" strokeWidth="1.600" />
          <path d="M12.500 4.500L16.500.500 15 6z" fill="#e8a860" />
        </svg>
      </button>
      <div className="ml-auto flex items-center">
        <svg viewBox="0 0 9 5" className="mr-[7px] h-[5px] w-[9px]" fill="none" stroke="#fff"><path d="M.5 4.500l4-4 4 4" /></svg>
        <svg viewBox="0 0 12 10" className="mr-[5px] h-[10px] w-3" fill="none" stroke="#fff">
          <path d="M3.500 3.500h7v5h-7z" />
          <path d="M5 5h4v2H5z" fill="#fff" />
          <path d="M11.500 5v2M.5 1v3h2V1M1.500 4v4h2" />
        </svg>
        <svg viewBox="0 0 12 11" className="mr-[5px] h-[11px] w-3" fill="none" stroke="#fff">
          <path d="M4 2.500h7.500v5H3.500M7.500 8v2M5 10.500h5M.5.500h2.500v4H.5zM2 5v5" />
        </svg>
        <svg viewBox="0 0 13 10" className="mr-[10px] h-[10px] w-[13px]" fill="none" stroke="#fff">
          <path d="M.5 3.500h2l2.500-3v9l-2.500-3h-2zM7 3.500c1 1 1 2 0 3" />
          <path d="M8.500 2c2 2 2 4 0 6M10.500 1c2.500 2.500 2.500 5.500 0 8" opacity=".5" />
        </svg>
        <svg viewBox="0 0 11 11" className="h-[11px] w-[11px]">
          <path d="M1 1l9.500-1L10 10 .5 11z" fill="#1fb52c" />
          <path d="M8 2.800C5 2 3.200 2.500 3.300 4s4.200 1 4.200 2.800S5 9 2.800 8" fill="none" stroke="#fff" strokeWidth="1.600" />
        </svg>
        <time className="ml-[11px] flex w-[46px] flex-col items-center text-[9px] leading-[14px] whitespace-nowrap">
          <span>9:12</span>
          <span>2018/9/30</span>
        </time>
        <span className="mr-[3px] ml-1 h-full w-px bg-[#4a554f]" />
      </div>
    </div>
  );
}

function Watermark() {
  return (
    <div className="pointer-events-none absolute right-[54px] bottom-[20px] flex w-[178px] flex-col text-white/80 [text-shadow:0_0_2px_rgba(90,100,120,0.45)]">
      <div className="flex h-[58px] items-end">
        <span className="text-[40px] leading-[38px] font-bold [font-family:'Liberation_Sans',sans-serif]">Bai</span>
        <svg viewBox="0 0 52 58" className="h-[58px] w-[52px]" fill="#fff" fillOpacity=".78">
          <ellipse cx="6.500" cy="23" rx="6.500" ry="8.500" />
          <ellipse cx="19" cy="10" rx="6.500" ry="9" />
          <ellipse cx="35" cy="11" rx="6.500" ry="8.500" transform="rotate(8 35 11)" />
          <ellipse cx="45" cy="27" rx="6.500" ry="8.500" />
          <path d="M14 31c6-8 18-8 24 0 4 5 10 8 9.500 15S41 57 34 56c-6-1-10-1-16 0-8 1-14-3-14-10s6-9 10-15z" />
          <text x="26" y="51" textAnchor="middle" fontSize="23" fontWeight="bold" fill="#5b82ba" fillOpacity="1" className="[font-family:'Liberation_Sans',sans-serif] [text-shadow:none]">
            du
          </text>
        </svg>
        <span className="ml-[2px] text-[30px] leading-[38px] font-bold whitespace-nowrap">经验</span>
      </div>
      <span className="text-[20px] leading-[26px] font-medium whitespace-nowrap [font-family:'Noto_Sans',sans-serif]">jingyan.baidu.com</span>
    </div>
  );
}

export default function App() {
  return (
    <div className={`relative flex h-screen min-h-[540px] flex-col overflow-hidden ${UI}`}>
      <TitleBar />
      <Tabs />
      <button aria-label="Office 按钮" className="absolute top-0 left-px">
        <OfficeOrb />
      </button>
      <Ribbon />
      <Workspace />
      <StatusBar />
      <Taskbar />
      <PrintDialog />
      <Watermark />
    </div>
  );
}
